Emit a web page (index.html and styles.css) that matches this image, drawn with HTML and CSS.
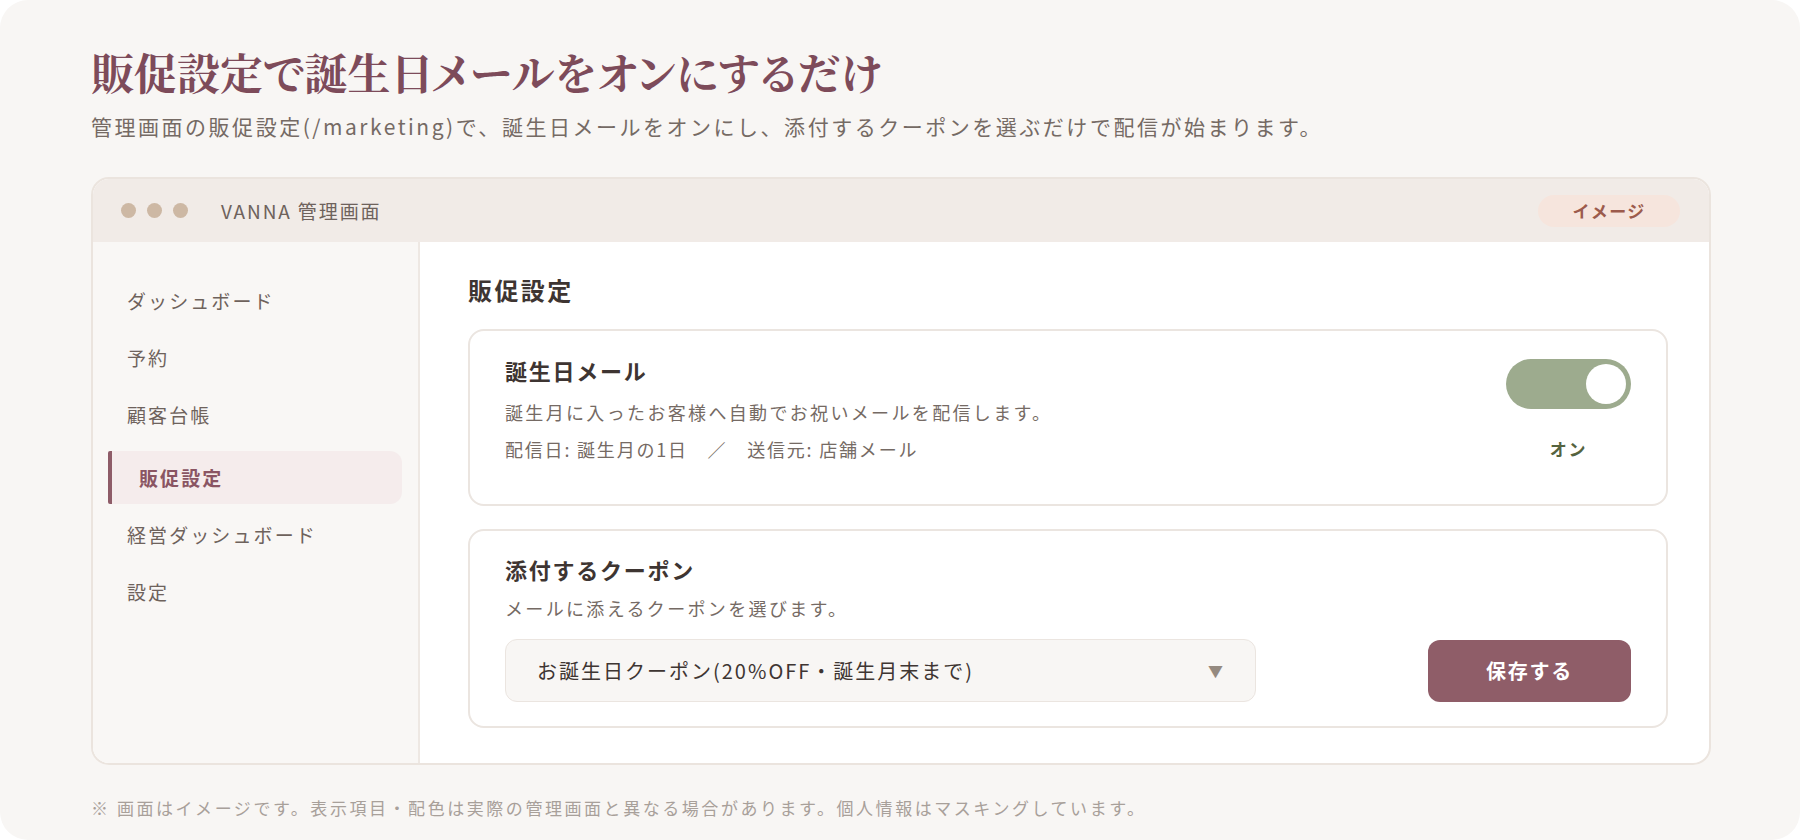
FILE: index.html
```html
<!DOCTYPE html>
<html lang="ja">
<head>
    <meta charset="utf-8">
    <title>販促設定 - 誕生日メール</title>
    <link rel="stylesheet" href="styles.css">
</head>
<body>
    <div class="page">
        <h1 class="page-title">販促設定で誕生日メールをオンにするだけ</h1>
        <p class="lead">管理画面の販促設定(/marketing)で、誕生日メールをオンにし、添付するクーポンを選ぶだけで配信が始まります。</p>

        <div class="window">
            <div class="window-bar">
                <div class="dots">
                    <span></span><span></span><span></span>
                </div>
                <div class="window-title">VANNA 管理画面</div>
                <div class="badge">イメージ</div>
            </div>

            <div class="window-body">
                <nav class="sidebar">
                    <div class="nav-item">ダッシュボード</div>
                    <div class="nav-item">予約</div>
                    <div class="nav-item">顧客台帳</div>
                    <div class="nav-item active">販促設定</div>
                    <div class="nav-item">経営ダッシュボード</div>
                    <div class="nav-item">設定</div>
                </nav>

                <main class="content">
                    <h2 class="section-title">販促設定</h2>

                    <div class="panel panel-mail">
                        <div class="panel-text">
                            <h3>誕生日メール</h3>
                            <p class="desc">誕生月に入ったお客様へ自動でお祝いメールを配信します。</p>
                            <p class="meta">配信日: 誕生月の1日　／　送信元: 店舗メール</p>
                        </div>
                        <div class="switch-wrap">
                            <div class="switch on"><span class="knob"></span></div>
                            <div class="switch-label">オン</div>
                        </div>
                    </div>

                    <div class="panel">
                        <h3>添付するクーポン</h3>
                        <p class="desc">メールに添えるクーポンを選びます。</p>
                        <div class="coupon-row">
                            <div class="select">
                                <span>お誕生日クーポン(20%OFF・誕生月末まで)</span>
                                <span class="caret">▼</span>
                            </div>
                            <button class="save-btn">保存する</button>
                        </div>
                    </div>
                </main>
            </div>
        </div>

        <p class="note">※ 画面はイメージです。表示項目・配色は実際の管理画面と異なる場合があります。個人情報はマスキングしています。</p>
    </div>
</body>
</html>
```

FILE: styles.css
```css
* {
    margin: 0;
    padding: 0;
    box-sizing: border-box;
}

body {
    background: #fff;
    font-family: 'Noto Sans CJK JP', 'Noto Sans', sans-serif;
    color: #6e625c;
}

.page {
    width: 1800px;
    height: 840px;
    background: #f8f6f4;
    border-radius: 28px;
    padding: 45px 89px 0 91px;
}

.page-title {
    font-family: 'Noto Serif CJK JP', 'Noto Sans CJK JP', serif;
    font-size: 43px;
    font-weight: 700;
    line-height: 54px;
    color: #7d4b5a;
    font-feature-settings: "palt";
}

.lead {
    margin-top: 12px;
    font-size: 21px;
    line-height: 30px;
    letter-spacing: 0.12em;
    color: #756a64;
}

.window {
    margin-top: 36px;
    height: 588px;
    border: 2px solid #ebe4de;
    border-radius: 18px;
    overflow: hidden;
    display: flex;
    flex-direction: column;
    background: #fff;
}

.window-bar {
    height: 63px;
    flex-shrink: 0;
    background: #f1ebe7;
    display: flex;
    align-items: center;
    padding: 0 29px 0 28px;
}

.dots {
    display: flex;
    gap: 11px;
}

.dots span {
    width: 15px;
    height: 15px;
    border-radius: 50%;
    background: #cdb8a4;
}

.window-title {
    margin-left: 33px;
    font-size: 19px;
    letter-spacing: 0.1em;
    color: #6e625c;
}

.badge {
    margin-left: auto;
    width: 142px;
    height: 32px;
    border-radius: 16px;
    background: #f6e5dd;
    color: #9c5b4c;
    font-size: 17px;
    font-weight: 700;
    letter-spacing: 0.08em;
    display: flex;
    align-items: center;
    justify-content: center;
}

.window-body {
    flex: 1;
    display: grid;
    grid-template-columns: 327px 1fr;
}

.sidebar {
    background: #f9f7f5;
    border-right: 2px solid #eee8e3;
    padding: 32px 16px 0 15px;
    display: flex;
    flex-direction: column;
    gap: 4px;
}

.nav-item {
    height: 53px;
    line-height: 53px;
    padding-left: 19px;
    font-size: 19px;
    letter-spacing: 0.11em;
    color: #6e625c;
    border-radius: 0 12px 12px 0;
}

.nav-item.active {
    margin-top: 6px;
    padding-left: 27px;
    background: #f5ecec;
    border-left: 4px solid #8e5c68;
    border-radius: 2px 12px 12px 2px;
    color: #8a5563;
    font-weight: 700;
}

.content {
    padding: 32px 41px 0 48px;
}

.section-title {
    font-size: 24px;
    line-height: 32px;
    font-weight: 700;
    letter-spacing: 0.1em;
    color: #3e3532;
    margin-bottom: 23px;
}

.panel {
    border: 2px solid #ebe5e0;
    border-radius: 16px;
    padding: 23px 35px 24px;
    margin-bottom: 23px;
}

.panel-mail {
    display: flex;
    justify-content: space-between;
    padding-top: 24px;
    padding-bottom: 40px;
}

.panel h3 {
    font-size: 22px;
    line-height: 30px;
    font-weight: 700;
    letter-spacing: 0.08em;
    color: #3e3532;
}

.desc {
    margin-top: 9px;
    font-size: 18px;
    line-height: 30px;
    letter-spacing: 0.13em;
    color: #756a64;
}

.panel-mail .desc {
    margin-top: 12px;
}

.meta {
    margin-top: 7px;
    font-size: 18px;
    line-height: 30px;
    letter-spacing: 0.1em;
    color: #756a64;
}

.switch-wrap {
    padding-top: 4px;
    display: flex;
    flex-direction: column;
    align-items: center;
}

.switch {
    width: 125px;
    height: 50px;
    border-radius: 25px;
    background: #9dab8e;
    display: flex;
    align-items: center;
    padding: 0 5px;
}

.switch.on {
    justify-content: flex-end;
}

.knob {
    width: 40px;
    height: 40px;
    border-radius: 50%;
    background: #fff;
}

.switch-label {
    margin-top: 28px;
    font-size: 17px;
    line-height: 24px;
    font-weight: 700;
    letter-spacing: 0.1em;
    color: #55633f;
}

.coupon-row {
    margin-top: 16px;
    display: flex;
    justify-content: space-between;
    align-items: center;
}

.select {
    width: 751px;
    height: 63px;
    background: #f8f6f4;
    border: 1px solid #ebe5e0;
    border-radius: 12px;
    padding: 0 32px 0 31px;
    display: flex;
    align-items: center;
    justify-content: space-between;
    font-size: 20px;
    letter-spacing: 0.1em;
    color: #3e3532;
}

.caret {
    font-size: 15px;
    color: #958a80;
    letter-spacing: 0;
}

.save-btn {
    width: 203px;
    height: 62px;
    border: none;
    border-radius: 12px;
    background: #8f5d68;
    color: #fff;
    font-family: 'Noto Sans CJK JP', sans-serif;
    font-size: 20px;
    font-weight: 700;
    letter-spacing: 0.09em;
}

.note {
    margin-top: 30px;
    font-size: 17px;
    line-height: 26px;
    letter-spacing: 0.15em;
    color: #a8a09a;
}
```
